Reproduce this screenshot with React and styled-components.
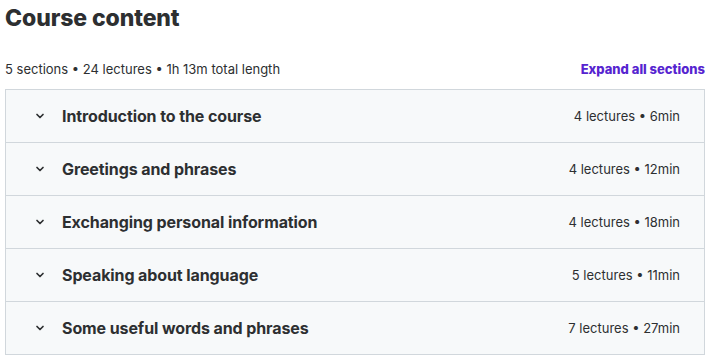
import React from 'react'
import styled, { createGlobalStyle } from 'styled-components'

const sections = [
  { title: 'Introduction to the course', lectures: 4, length: '6min' },
  { title: 'Greetings and phrases', lectures: 4, length: '12min' },
  { title: 'Exchanging personal information', lectures: 4, length: '18min' },
  { title: 'Speaking about language', lectures: 5, length: '11min' },
  { title: 'Some useful words and phrases', lectures: 7, length: '27min' },
]

const Chevron = () => (
  <svg width="12" height="12" viewBox="0 0 24 24" fill="none" stroke="#2d2f31" strokeWidth="3.4" strokeLinecap="round" strokeLinejoin="round">
    <polyline points="6 9 12 15 18 9" />
  </svg>
)

const App = () => {
  return (
    <>
      <GlobalStyle />
      <Page>
        <Heading>Course content</Heading>
        <SummaryBar>
          <Summary>5 sections • 24 lectures • 1h 13m total length</Summary>
          <ExpandLink>Expand all sections</ExpandLink>
        </SummaryBar>
        <Accordion>
          {sections.map((s) => (
            <SectionRow key={s.title}>
              <IconCell><Chevron /></IconCell>
              <SectionTitle>{s.title}</SectionTitle>
              <SectionMeta>{s.lectures} lectures • {s.length}</SectionMeta>
            </SectionRow>
          ))}
        </Accordion>
      </Page>
    </>
  )
}

export default App

const GlobalStyle = createGlobalStyle`
  body {
    margin: 0;
    background: #fff;
    font-family: Inter, "Noto Sans", sans-serif;
    color: #2d2f31;
  }
`
const Page = styled.div`
  width: 700px;
  padding: 4px 0 0 5px;
`
const Heading = styled.h2`
  margin: 0;
  font-size: 23px;
  font-weight: 800;
  line-height: 28px;
  letter-spacing: -0.1px;
`
const SummaryBar = styled.div`
  display: flex;
  justify-content: space-between;
  align-items: center;
  margin-top: 27px;
  height: 20px;
  margin-bottom: 10px;
`
const Summary = styled.span`
  font-size: 13px;
`
const ExpandLink = styled.button`
  background: none;
  border: none;
  padding: 0;
  font-family: inherit;
  font-size: 13px;
  font-weight: 800;
  color: #5624d0;
  cursor: pointer;
`
const Accordion = styled.div`
  border: 1px solid #d1d7dc;
  border-bottom: none;
`
const SectionRow = styled.div`
  display: flex;
  align-items: center;
  height: 52px;
  background: #f7f9fa;
  border-bottom: 1px solid #d1d7dc;
  padding: 0 24px 0 28px;
`
const IconCell = styled.span`
  display: flex;
  width: 28px;
`
const SectionTitle = styled.span`
  flex: 1;
  font-size: 16px;
  font-weight: 700;
  letter-spacing: -0.1px;
`
const SectionMeta = styled.span`
  font-size: 13px;
`
